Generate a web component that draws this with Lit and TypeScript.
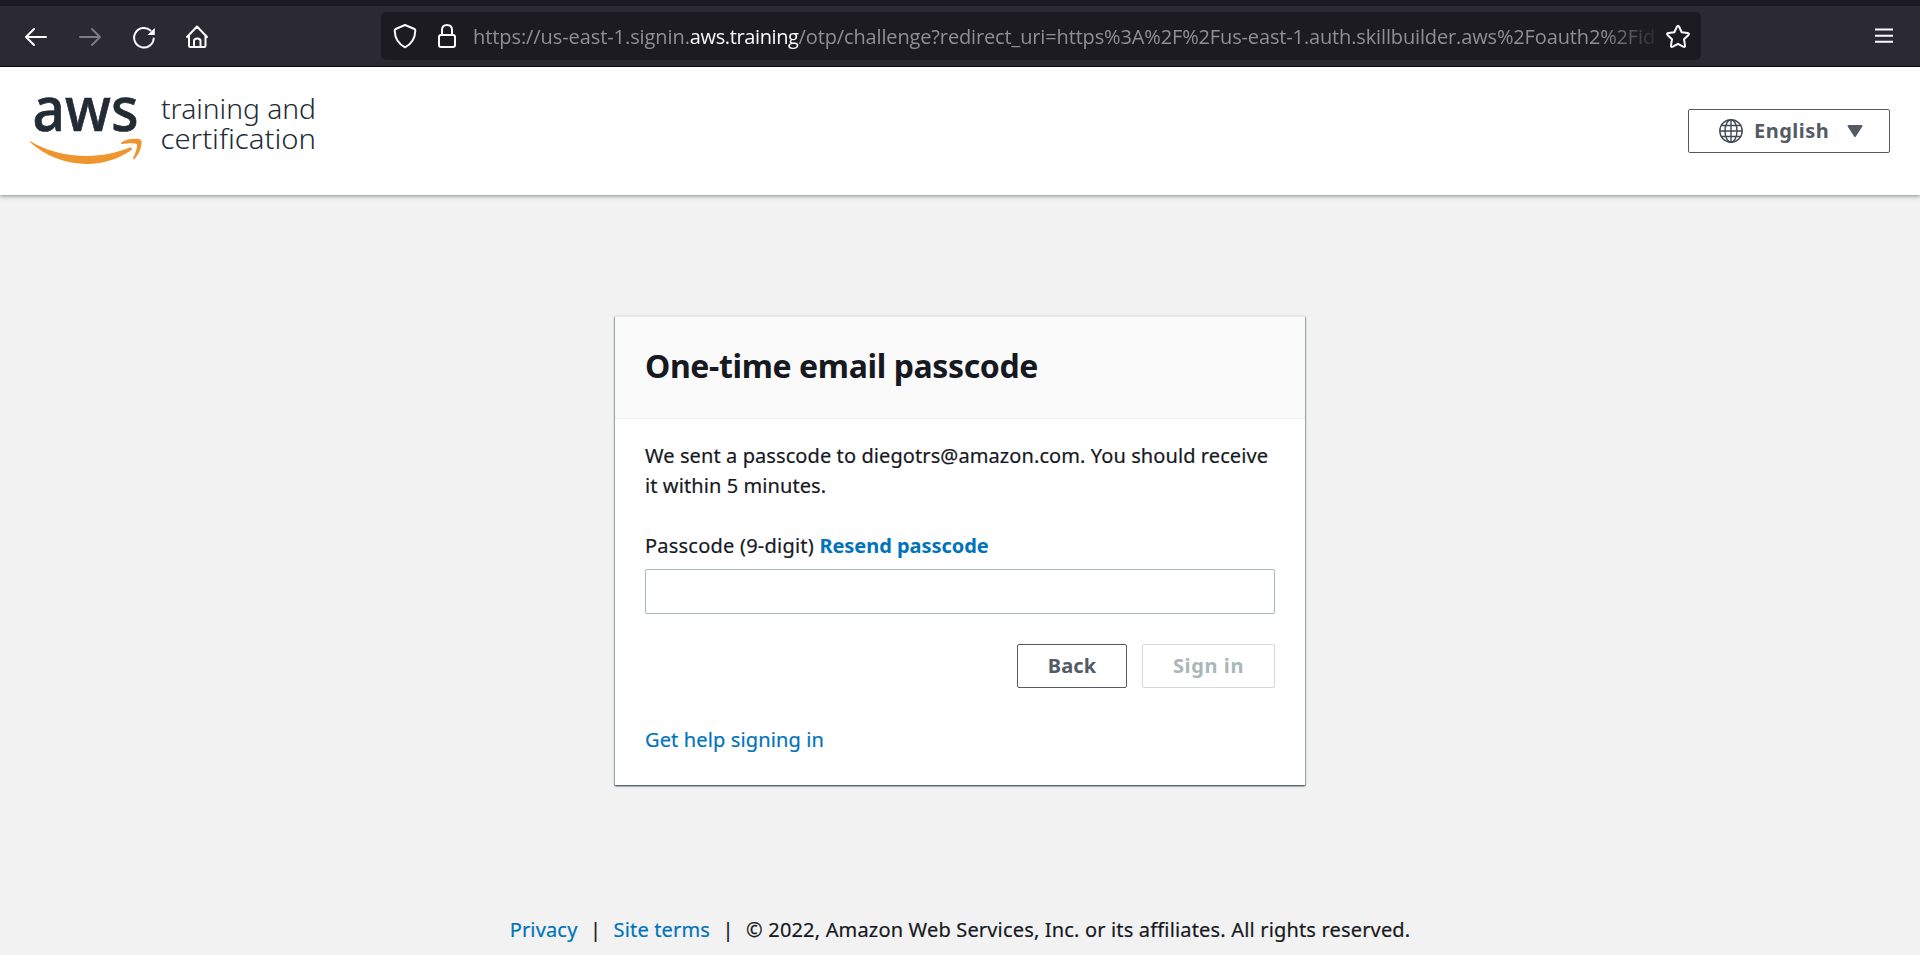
import { LitElement, html, css } from "lit";
import { customElement } from "lit/decorators.js";

@customElement("browser-bar")
class BrowserBar extends LitElement {
  static styles = css`
    :host { display: block; font-family: "Open Sans", "Noto Sans", sans-serif; }
    .strip { height: 6px; background: #1c1b22; }
    .bar {
      box-sizing: border-box; height: 61px; background: #2b2a33; border-bottom: 1px solid #0c0c0d;
      display: grid; grid-template-columns: 381px 1320px 1fr; align-items: center;
    }
    .nav { display: flex; gap: 26px; padding-left: 22px; }
    svg { display: block; flex: none; fill: none; stroke: #fbfbfe; stroke-width: 2; stroke-linecap: round; stroke-linejoin: round; }
    .dim { stroke: #7d7c84; }
    .solid { fill: #fbfbfe; stroke: none; }
    .address {
      height: 48px; border-radius: 5px; background: #1c1b22;
      display: flex; align-items: center;
    }
    .shield { margin-left: 10px; }
    .lock { margin-left: 14px; }
    .url {
      width: 1181px; margin-left: 12px; padding-top: 2px; overflow: hidden; white-space: nowrap; font-size: 20px; line-height: 30px;
      color: #8f8f96; display: flex;
      -webkit-mask-image: linear-gradient(to right, #000 1130px, transparent 1190px);
      mask-image: linear-gradient(to right, #000 1130px, transparent 1190px);
    }
    .scheme { letter-spacing: -0.08px; }
    .domain { color: #fbfbfe; font-weight: 500; letter-spacing: -0.38px; }
    .path { letter-spacing: -0.14px; }
    .star { margin-left: 10px; }
    .menu { margin-left: 173px; stroke-linecap: butt; }
  `;

  render() {
    return html`
      <div class="strip"></div>
      <div class="bar">
        <div class="nav">
          <svg width="28" height="28" viewBox="22 22 28 28"><path d="M46 37H26.500M34 29L26 37L34 45" /></svg>
          <svg class="dim" width="28" height="28" viewBox="76 22 28 28"><path d="M80 37H99.500M92 29L100 37L92 45" /></svg>
          <svg width="28" height="28" viewBox="130 22 28 28">
            <path d="M153.700 38.500A9.800 9.800 0 1 1 150.500 30.500" />
            <path class="solid" d="M154.800 28V35H147.500Z" />
          </svg>
          <svg width="28" height="28" viewBox="184 22 28 28">
            <path d="M187 37L197 26.500L207 37M189 35V45.500Q189 47 190.500 47H204Q205.500 47 205.500 45.500V35M194 47V41Q194 38.500 197.200 38.500Q200.500 38.500 200.500 41V47" />
          </svg>
        </div>
        <div class="address">
          <svg class="shield" width="28" height="28" viewBox="391 22 28 28">
            <path d="M405 25L414.500 29Q415.500 29.500 415.300 31C415 38 411.500 44 405 47.300C398.500 44 395 38 394.700 31Q394.600 29.500 395.600 29Z" />
          </svg>
          <svg class="lock" width="28" height="28" viewBox="433 22 28 28">
            <rect x="439" y="35" width="16" height="12" rx="2" />
            <path d="M442 35V30Q442 25 447 25Q452 25 452 30V35" />
          </svg>
          <div class="url"><span class="scheme">https://us-east-1.signin.</span><span class="domain">aws.training</span><span class="path">/otp/challenge?redirect_uri=https%3A%2F%2Fus-east-1.auth.skillbuilder.aws%2Foauth2%2Fid</span></div>
          <svg class="star" width="28" height="28" viewBox="1664 22 28 28">
            <path d="M1676.900 26.800Q1678 24.700 1679.100 26.800L1681.700 32.200L1687.500 33Q1689.900 33.400 1688.200 35.200L1684 39.200L1685 45.300Q1685.300 47.600 1683.200 46.600L1678 43.800L1672.800 46.600Q1670.700 47.600 1671 45.300L1672 39.200L1667.800 35.200Q1666.100 33.400 1668.500 33L1674.300 32.200Z" />
          </svg>
        </div>
        <svg class="menu" width="20" height="18" viewBox="1874 27 20 18"><path d="M1875 29.500H1893M1875 35.700H1893M1875 41.800H1893" /></svg>
      </div>
    `;
  }
}

@customElement("site-header")
class SiteHeader extends LitElement {
  static styles = css`
    :host {
      box-sizing: border-box; height: 128px; padding: 0 30px 0 28px; background: #fff;
      display: flex; justify-content: space-between; align-items: center;
      box-shadow: 0 1px 4px 0 rgba(0, 40, 35, 0.5); position: relative;
      font-family: "Noto Sans", sans-serif;
    }
    .logo { display: block; overflow: visible; }
    .brand { font-weight: 500; font-size: 61px; fill: #232b35; stroke: #232b35; stroke-width: 0.7px; }
    .product { font-weight: 300; font-size: 28px; fill: #232b35; }
    .smile { fill: #ee952d; }
    .lang {
      box-sizing: border-box; width: 202px; height: 44px; border: 1px solid #545b64; border-radius: 2px;
      background: #fff; display: flex; align-items: center; padding: 0 0 0 30px; color: #545b64;
      font: 700 20px/30px "Noto Sans", sans-serif; letter-spacing: 0.5px;
    }
    .globe { fill: none; stroke: #414a56; stroke-width: 1.4; margin-right: 11px; }
    .caret { fill: #545b64; stroke: #545b64; stroke-width: 2; stroke-linejoin: round; margin-left: 18px; }
  `;

  render() {
    return html`
      <svg class="logo" width="300" height="80" viewBox="28 91 300 80">
        <text class="brand" x="32.500" y="131" textLength="106" lengthAdjust="spacingAndGlyphs">aws</text>
        <path class="smile" d="M30.300 141.200C47 151 66 156 87 156C102 156 117 153 129.500 147.600C131.800 146.700 133 149 131 150.300C119 159 103 164 87 164C66 164 45 156 30.500 142.600C29.700 141.700 29.800 140.900 30.300 141.200Z" />
        <path class="smile" d="M134.500 159C133.300 160 132.800 159 133.300 158C135 154 138 146 136.800 144.400C135.400 142.600 127 143.300 122 144C120.600 144 120.600 143 121.800 142.200C128 138 139.500 138.300 141.200 140.200C142.700 142.300 140.500 153 134.500 159Z" />
        <text class="product" x="161" y="119" textLength="155" lengthAdjust="spacingAndGlyphs">training and</text>
        <text class="product" x="160.500" y="149" textLength="155.500" lengthAdjust="spacingAndGlyphs">certification</text>
      </svg>
      <button class="lang">
        <svg class="globe" width="24" height="24" viewBox="0 0 24 24">
          <circle cx="12" cy="12" r="11.200" />
          <ellipse cx="12" cy="12" rx="6" ry="11.200" />
          <path d="M12 .8V23.200M.8 12H23.200M2.600 6.500H21.400M2.600 17.500H21.400" />
        </svg>
        <span>English</span>
        <svg class="caret" width="16" height="14" viewBox="0 0 16 14"><path d="M1.500 2H14.500L8 12Z" /></svg>
      </button>
    `;
  }
}

@customElement("passcode-card")
class PasscodeCard extends LitElement {
  static styles = css`
    :host {
      box-sizing: border-box; display: block; width: 690px; height: 469px; background: #fff;
      box-shadow: 0 1px 2px 0 rgba(0, 28, 36, 0.75), 1px 1px 1px 0 rgba(0, 28, 36, 0.15), -1px 1px 1px 0 rgba(0, 28, 36, 0.15);
      font: 20px/30px "Noto Sans", sans-serif; color: #16191f; -webkit-text-stroke: 0.2px;
    }
    .head {
      box-sizing: border-box; height: 103px; padding: 27px 30px 0; background: #fafafa;
      border-top: 1px solid #eaeded; border-bottom: 1px solid #eaeded;
    }
    h1 { margin: 0; font-size: 32px; line-height: 44px; font-weight: 700; letter-spacing: -0.38px; -webkit-text-stroke: 0; }
    .body { padding: 22px 30px 0; }
    p { margin: 0 0 30px; white-space: nowrap; letter-spacing: 0.09px; }
    .label { letter-spacing: 0.22px; white-space: nowrap; }
    .resend { font-weight: 700; letter-spacing: -0.05px; -webkit-text-stroke: 0; }
    a { color: #0073bb; text-decoration: none; }
    .field {
      box-sizing: border-box; display: block; width: 100%; height: 45px; margin-top: 8px;
      border: 1px solid #aab7b8; border-radius: 2px; background: #fff; outline: none;
    }
    .actions { display: flex; justify-content: flex-end; gap: 15px; margin-top: 30px; }
    button {
      box-sizing: border-box; height: 44px; padding: 0 0 2px; border-radius: 2px; background: #fff;
      font: 700 20px "Noto Sans", sans-serif; letter-spacing: 0.1px; -webkit-text-stroke: 0;
    }
    .back { width: 110px; border: 1px solid #545b64; color: #545b64; }
    .submit { width: 133px; border: 1px solid #d5dbdb; color: #aab7b8; letter-spacing: 0.6px; }
    .help { display: block; margin-top: 37px; letter-spacing: 0.13px; }
  `;

  render() {
    return html`
      <div class="head"><h1>One-time email passcode</h1></div>
      <div class="body">
        <p>We sent a passcode to diegotrs@amazon.com. You should receive<br />it within 5 minutes.</p>
        <div class="label">Passcode (9-digit) <a class="resend">Resend passcode</a></div>
        <input class="field" />
        <div class="actions">
          <button class="back">Back</button>
          <button class="submit" disabled>Sign in</button>
        </div>
        <a class="help">Get help signing in</a>
      </div>
    `;
  }
}

@customElement("app-root")
class AppRoot extends LitElement {
  static styles = css`
    :host { display: flex; flex-direction: column; height: 955px; overflow: hidden; background: #f2f2f2; }
    .main { flex: 1; display: flex; flex-direction: column; align-items: center; padding-top: 121px; }
    .footer {
      margin-top: 130px; display: flex; white-space: nowrap;
      font: 20px/30px "Noto Sans", sans-serif; color: #16191f; letter-spacing: 0.17px; -webkit-text-stroke: 0.2px;
    }
    .footer a { color: #0073bb; }
    .sep { width: 36px; text-align: center; }
  `;

  render() {
    return html`
      <browser-bar></browser-bar>
      <site-header></site-header>
      <div class="main">
        <passcode-card></passcode-card>
        <div class="footer">
          <a>Privacy</a><span class="sep">|</span><a>Site terms</a><span class="sep">|</span>
          <span>© 2022, Amazon Web Services, Inc. or its affiliates. All rights reserved.</span>
        </div>
      </div>
    `;
  }
}
